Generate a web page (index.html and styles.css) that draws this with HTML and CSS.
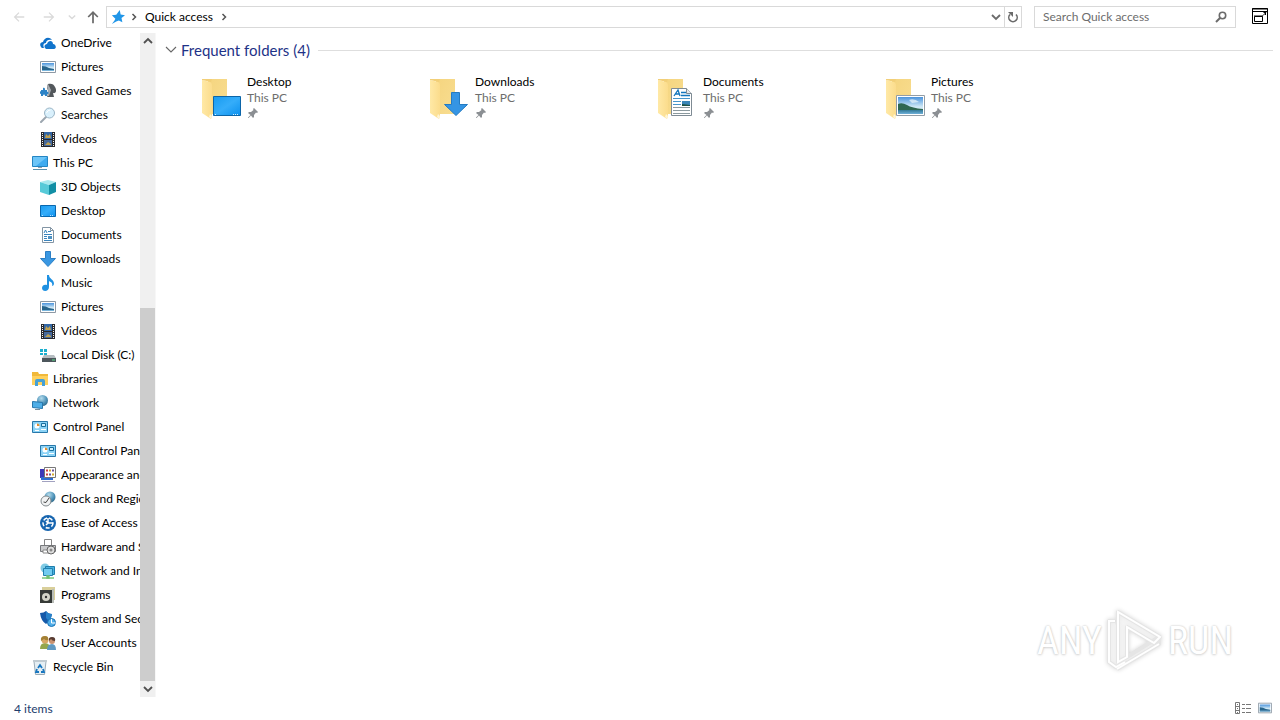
FILE: index.html
```html
<!DOCTYPE html>
<html lang="en">
<head>
<meta charset="utf-8">
<title>Quick access</title>
<link rel="stylesheet" href="styles.css">
</head>
<body>
<svg class="sprite" aria-hidden="true">
  <defs>
    <linearGradient id="g-blue" x1="0" y1="0" x2="1" y2="1"><stop offset="0" stop-color="#189bf0"/><stop offset=".5" stop-color="#35adfa"/><stop offset="1" stop-color="#0b90ee"/></linearGradient>
    <linearGradient id="g-folder" x1="0" y1="0" x2="1" y2="1"><stop offset="0" stop-color="#f5d57f"/><stop offset="1" stop-color="#f8dd91"/></linearGradient>
    <linearGradient id="g-flap" x1="0" y1="0" x2="1" y2="0"><stop offset="0" stop-color="#ffe9a6"/><stop offset="1" stop-color="#fbdc8c"/></linearGradient>
    <linearGradient id="g-sky" x1="0" y1="0" x2="0" y2="1"><stop offset="0" stop-color="#4a93dc"/><stop offset=".55" stop-color="#cbe6f5"/><stop offset="1" stop-color="#eef7fa"/></linearGradient>
    <linearGradient id="g-sea" x1="0" y1="0" x2="0" y2="1"><stop offset="0" stop-color="#236b86"/><stop offset="1" stop-color="#6fb0d8"/></linearGradient>
    <radialGradient id="g-globe" cx=".4" cy=".3" r=".8"><stop offset="0" stop-color="#b5dcec"/><stop offset=".6" stop-color="#4c91b8"/><stop offset="1" stop-color="#28617f"/></radialGradient>
  </defs>
  <symbol id="i-onedrive" viewBox="0 0 16 16"><path d="M1 12C-1 9 1 7 3 7 4 3 9 1 12 5 8 4 6 6 6 8 3 8 3 11 4 13H3C2 13 1 12.500 1 12Z" fill="#0f70c8"/><path d="M6 14C3 12 5 9 7 9 8 5 13 5 13 9 16 9 17 14 14 14Z" fill="#1174cc"/></symbol>
  <symbol id="i-pictures" viewBox="0 0 16 16"><path d="M.5 2.500h15v11H.5z" fill="#fff" stroke="#8d99a5"/><path d="M2 4h12v8H2z" fill="url(#g-sky)"/><path d="M2 7q4 0 7 2l5 1v2H2z" fill="#28658c"/><path d="M2 11h12v1H2z" fill="#78b4da"/></symbol>
  <symbol id="i-games" viewBox="0 0 16 16"><path d="M8 1c3-1 6 0 7 3 2 3 1 7-2 6l1 4H7l2-4-2-5z" fill="#53585c"/><path d="M8 1l3 6-2 6H7l1-5-1-5z" fill="#a6abb0"/><path d="M3 5c2-1 2 1 2 2h2v2c2-1 2 3 0 2v2H5c0-2-2-2-2 0H1v-2c-2 0-1-3 0-3V7h2z" fill="#2c83c7"/></symbol>
  <symbol id="i-search" viewBox="0 0 16 16"><path d="M6 10l-5 5" stroke="#9ca6af" stroke-width="2" stroke-linecap="round"/><circle cx="9.500" cy="6" r="5" fill="#d9f0fc" stroke="#9bb5c6"/><path d="M6.500 6q1-3 4-3" fill="none" stroke="#fff"/></symbol>
  <symbol id="i-videos" viewBox="0 0 16 16"><path d="M1 1h14v15H1z" fill="#28292c"/><path d="M4 1h8v7H4z" fill="#3266a5"/><path d="M4 9h8v6H4z" fill="#45699b"/><path d="M6 3l2 2 2-2 1 4H5zM5 14l3-3 3 2v1z" fill="#c0a150"/><path d="M2.500 2v13M13.500 2v13" stroke="#f5f5f5" stroke-dasharray="1 1"/></symbol>
  <symbol id="i-pc" viewBox="0 0 16 16"><path d="M.5 1.500h15v10H.5z" fill="#3fabf0" stroke="#2585c2"/><path d="M1 2h14L4 11H1z" fill="#6cc5f8"/><path d="M6 12h4v1H6z" fill="#92a0aa"/><path d="M1 14.500h14" stroke="#5990ae"/></symbol>
  <symbol id="i-3d" viewBox="0 0 16 16"><path d="M0 3l8-2 8 2-7 3z" fill="#a8e9ee"/><path d="M0 3l9 3v10l-9-3z" fill="#57cad8"/><path d="M9 6l7-3v10l-7 3z" fill="#128fa5"/></symbol>
  <symbol id="i-desktop" viewBox="0 0 16 16"><path d="M.5 2.500h15v11H.5z" fill="url(#g-blue)" stroke="#0967ae"/><path d="M2 12.500h2M10 12.500h4" stroke="#b4dfff" stroke-dasharray="1 1"/></symbol>
  <symbol id="i-document" viewBox="0 0 16 16"><path d="M2.500.5h8l3 3v12h-11z" fill="#fff" stroke="#8395a4"/><path d="M10.500.5v3h3" fill="none" stroke="#8395a4"/><path d="M4 6l1.500-3L7 6M8 4.500h3M4 7.500h8M4 9.500h3M4 11.500h3M4 13.500h8" fill="none" stroke="#3a84bd"/><path d="M8 9h4v3H8z" fill="#4e91c2"/></symbol>
  <symbol id="i-down" viewBox="0 0 16 16"><path d="M5.500.5h5v7h5L8 15.500.5 7.500h5z" fill="#3997e2" stroke="#2b7fc5"/></symbol>
  <symbol id="i-music" viewBox="0 0 16 16"><path d="M7 0h2c0 4 5 4 5 9-.3 1-1 2-2 2 1-3-1-4-3-5v6c0 5-7 5-7 1 0-3 3-4 5-3z" fill="#1f91e2"/></symbol>
  <symbol id="i-disk" viewBox="0 0 16 16"><path d="M0 2h3v3H0zM4 2h3v3H4zM0 6h3v2H0zM4 6h3v2H4z" fill="#1bafcf"/><path d="M4 8h10l2 3H2z" fill="#b6bdc1"/><path d="M2 11h14v4H2z" fill="#4d565c"/><path d="M12 13h3" stroke="#58dd88"/></symbol>
  <symbol id="i-libraries" viewBox="0 0 16 16"><path d="M0 1h6l1 2h9v11H0z" fill="#f1b93a"/><path d="M0 5h16v9H0z" fill="#ffd15d"/><path d="M3 15v-5q0-2 2-2h6q2 0 2 2v5h-3v-4H6v4z" fill="#46a0d5"/></symbol>
  <symbol id="i-network" viewBox="0 0 16 16"><circle cx="10.500" cy="5.500" r="5.500" fill="url(#g-globe)"/><path d="M.5 6.500l10 1v6l-10-1z" fill="#4eaee7" stroke="#2877ac"/><path d="M3 14.500h5" stroke="#78909f"/></symbol>
  <symbol id="i-control" viewBox="0 0 16 16"><path d="M.5 2.500h15v11H.5z" fill="#8bd3f6" stroke="#2878aa"/><circle cx="5" cy="7" r="2.500" fill="#fff"/><path d="M5 7V4.500A2.500 2.500 0 0 1 7.500 7z" fill="#e08c2d"/><path d="M3 11.500h4M9 10.500h5" stroke="#fff"/><path d="M9.500 4.500h4v3h-4z" fill="#cdefff" stroke="#176d9d"/></symbol>
  <symbol id="i-appearance" viewBox="0 0 16 16"><path d="M0 2h8v9H0z" fill="#3c38b8"/><path d="M1 10h12v3H1z" fill="#2e6ed0"/><path d="M4.500.5h11v10h-11z" fill="#fff" stroke="#777"/><path d="M6 3.500h2M6 7.500h2" stroke="#cf403e" stroke-width="2"/><path d="M9 3.500h2M12 7.500h2" stroke="#d3a92c" stroke-width="2"/><path d="M12 3.500h2M9 7.500h2" stroke="#6a5299" stroke-width="2"/><path d="M2 14.500h13" stroke="#a2a2c0"/></symbol>
  <symbol id="i-clock" viewBox="0 0 16 16"><circle cx="10" cy="6" r="5.500" fill="url(#g-globe)"/><circle cx="6" cy="10" r="5" fill="#f0f2f3" stroke="#81898d"/><path d="M3.500 11l2.500.5L9 7" fill="none" stroke="#444"/></symbol>
  <symbol id="i-ease" viewBox="0 0 16 16"><circle cx="8" cy="8" r="8" fill="#1765af"/><circle cx="8" cy="8" r="5" fill="none" stroke="#fff" stroke-width="1.500" stroke-dasharray="4 2"/><path d="M8 3v5h5M6 6l2 2-2 2" fill="none" stroke="#fff" stroke-width="1.500"/></symbol>
  <symbol id="i-hardware" viewBox="0 0 16 16"><path d="M4.500.5h7v6h-7z" fill="#fff" stroke="#858585"/><path d="M.5 6.500h15v6H.5z" fill="#c9cacc" stroke="#77797c"/><path d="M3 11h6v3H3z" fill="#fff" stroke="#888"/><circle cx="11" cy="11" r="4" fill="#ddd" stroke="#666"/><circle cx="11" cy="11" r="1.500" fill="#888"/></symbol>
  <symbol id="i-internet" viewBox="0 0 16 16"><circle cx="5" cy="5" r="4.500" fill="#81cbe4"/><path d="M5.500 3.500h9v8h-9z" fill="#48b1e1" stroke="#207eac"/><path d="M3.500 5.500h9v7h-9z" fill="#71cbf0" stroke="#2382b0"/><path d="M2 15h12M7 13h2v3H7z" stroke="#7bc97c" stroke-width="1.500"/></symbol>
  <symbol id="i-programs" viewBox="0 0 16 16"><path d="M2 0h13v13H2z" fill="#d9cf9a"/><path d="M0 3h12v13H0z" fill="#363a37"/><path d="M12 2h2v14h-2z" fill="#b9bdb8"/><circle cx="6" cy="10" r="4" fill="#d3d4c8"/><circle cx="6" cy="10" r="1.200" fill="#333"/></symbol>
  <symbol id="i-system" viewBox="0 0 16 16"><path d="M0 2q4 0 6-2 2 3 6 3-1 7-6 10-5-3-6-11z" fill="#1559a9"/><path d="M6 0q2 3 6 3-.5 4-3 7L6 7z" fill="#2781ca"/><circle cx="11.500" cy="11.500" r="4" fill="#51aee9" stroke="#1671b3"/><path d="M11.500 8v4h4" stroke="#fff" fill="none"/></symbol>
  <symbol id="i-users" viewBox="0 0 16 16"><path d="M0 14q0-6 5-6t5 6z" fill="#94a64d"/><circle cx="5" cy="5" r="3.500" fill="#d9a866"/><path d="M1 6q-1-5 4-5 4 0 3 4-2 1-4-1z" fill="#a48135"/><path d="M7 15q0-6 5-6 4 0 4 6z" fill="#6099c2"/><circle cx="12" cy="6" r="3" fill="#c99270"/><path d="M9 6q-1-4 3-4t3 4q-3 0-4-2z" fill="#583c32"/></symbol>
  <symbol id="i-recycle" viewBox="0 0 16 16"><path d="M2 2.500h12l-1.500 13h-9z" fill="#e5eef3" stroke="#9aabb6"/><path d="M1 2h14" stroke="#c1cbd1" stroke-width="2"/><path d="M6 9l2-3 2 3M5 10l-1 3h3M11 10l1 3H9" fill="none" stroke="#1977c0" stroke-width="1.800"/></symbol>
  <symbol id="i-star" viewBox="0 0 16 16"><path d="M10 0l1 5 5 1-4 3 1 5-4-2-3 1-5 3 3-4 1-2-4-4 5-.5z" fill="#2196e8"/></symbol>
  <symbol id="i-left" viewBox="0 0 16 16"><path d="M14 8H3M8 3L3 8l5 5" fill="none" stroke="currentColor" stroke-width="1.500"/></symbol>
  <symbol id="i-right" viewBox="0 0 16 16"><path d="M2 8h11M8 3l5 5-5 5" fill="none" stroke="currentColor" stroke-width="1.500"/></symbol>
  <symbol id="i-up" viewBox="0 0 16 16"><path d="M8 15V2M2.500 8L8 2.500 13.500 8" fill="none" stroke="currentColor" stroke-width="2"/></symbol>
  <symbol id="i-chev-r" viewBox="0 0 8 8"><path d="M2.500 1l3 3-3 3" fill="none" stroke="currentColor" stroke-width="1.500"/></symbol>
  <symbol id="i-chev-d" viewBox="0 0 10 10"><path d="M1 3l4 4 4-4" fill="none" stroke="currentColor" stroke-width="1.800"/></symbol>
  <symbol id="i-chev-thin" viewBox="0 0 12 12"><path d="M1 3l5 5 5-5" fill="none" stroke="currentColor" stroke-width="1.100"/></symbol>
  <symbol id="i-chev-u" viewBox="0 0 10 10"><path d="M1 7l4-4 4 4" fill="none" stroke="currentColor" stroke-width="1.800"/></symbol>
  <symbol id="i-refresh" viewBox="0 0 12 12"><path d="M9 3.500A4.200 4.200 0 1 1 3 3.500" fill="none" stroke="currentColor" stroke-width="1.600"/><path d="M1 1h5v5z" fill="currentColor"/></symbol>
  <symbol id="i-find" viewBox="0 0 12 12"><circle cx="7.500" cy="4.500" r="3.200" fill="none" stroke="currentColor" stroke-width="1.600"/><path d="M5 7l-4 4" stroke="currentColor" stroke-width="2"/></symbol>
  <symbol id="i-window" viewBox="0 0 16 16"><path d="M.5.5h15v15H.5zM1 3.500h14M2.500 8.500h8v5h-8zM11 7.500l3-3M11.500 4.500H14M13.500 4v3" fill="none" stroke="#000"/><path d="M2 8h9M0 1h16" stroke="#000" stroke-width="1"/></symbol>
  <symbol id="i-pin" viewBox="0 0 12 12"><path d="M7 1l4 4-1 1-1-.5L7 8v2L6 11 4 8.500 1.500 11H1v-.5L3.500 8 1 6l1-1h2l2.500-2L6 2z" fill="#8b8f93"/></symbol>
  <symbol id="i-folder" viewBox="0 0 40 42"><path d="M6 1h19v35H6z" fill="url(#g-folder)"/><path d="M0 2l8 2q2 1 2 3v31l-1 3-9-6z" fill="url(#g-flap)"/><path d="M0 2V1h10l-1 3z" fill="#f2cf78"/><path d="M8 36l2 2-1 3-2-2z" fill="#fff5d5"/></symbol>
  <symbol id="i-details" viewBox="0 0 16 12"><path d="M.5.5h4v11h-4zM0 4.500h5M0 8.500h5M7 2.500h3M11 2.500h5M7 6.500h3M11 6.500h5M7 10.500h3M11 10.500h5M2 2.500h1M2 6.500h1M2 10.500h1" fill="none" stroke="#777"/></symbol>
</svg>

<div class="explorer">
  <header class="toolbar">
    <nav class="history" aria-label="History">
      <button class="tool dim" aria-label="Back"><svg class="icon14"><use href="#i-left"/></svg></button>
      <button class="tool dim" aria-label="Forward"><svg class="icon14"><use href="#i-right"/></svg></button>
      <button class="tool dim recent" aria-label="Recent locations"><svg class="icon8"><use href="#i-chev-d"/></svg></button>
      <button class="tool" aria-label="Up"><svg class="icon14"><use href="#i-up"/></svg></button>
    </nav>
    <div class="address">
      <svg class="icon14"><use href="#i-star"/></svg>
      <svg class="icon8 crumb-arrow"><use href="#i-chev-r"/></svg>
      <a class="crumb" href="#">Quick access</a>
      <svg class="icon8 crumb-arrow"><use href="#i-chev-r"/></svg>
      <button class="tool address-drop" aria-label="Previous locations"><svg class="icon10"><use href="#i-chev-d"/></svg></button>
      <button class="tool refresh" aria-label="Refresh"><svg class="icon12"><use href="#i-refresh"/></svg></button>
    </div>
    <div class="search">
      <input type="text" aria-label="Search Quick access" placeholder="Search Quick access">
      <button class="tool" aria-label="Search"><svg class="icon12"><use href="#i-find"/></svg></button>
    </div>
    <button class="tool expand" aria-label="Open window"><svg class="icon16"><use href="#i-window"/></svg></button>
  </header>

  <div class="body">
    <nav class="tree" aria-label="Folders">
      <a class="child" href="#"><svg class="icon16"><use href="#i-onedrive"/></svg>OneDrive</a>
      <a class="child" href="#"><svg class="icon16"><use href="#i-pictures"/></svg>Pictures</a>
      <a class="child" href="#"><svg class="icon16"><use href="#i-games"/></svg>Saved Games</a>
      <a class="child" href="#"><svg class="icon16"><use href="#i-search"/></svg>Searches</a>
      <a class="child" href="#"><svg class="icon16"><use href="#i-videos"/></svg>Videos</a>
      <a href="#"><svg class="icon16"><use href="#i-pc"/></svg>This PC</a>
      <a class="child" href="#"><svg class="icon16"><use href="#i-3d"/></svg>3D Objects</a>
      <a class="child" href="#"><svg class="icon16"><use href="#i-desktop"/></svg>Desktop</a>
      <a class="child" href="#"><svg class="icon16"><use href="#i-document"/></svg>Documents</a>
      <a class="child" href="#"><svg class="icon16"><use href="#i-down"/></svg>Downloads</a>
      <a class="child" href="#"><svg class="icon16"><use href="#i-music"/></svg>Music</a>
      <a class="child" href="#"><svg class="icon16"><use href="#i-pictures"/></svg>Pictures</a>
      <a class="child" href="#"><svg class="icon16"><use href="#i-videos"/></svg>Videos</a>
      <a class="child" href="#"><svg class="icon16"><use href="#i-disk"/></svg>Local Disk (C:)</a>
      <a href="#"><svg class="icon16"><use href="#i-libraries"/></svg>Libraries</a>
      <a href="#"><svg class="icon16"><use href="#i-network"/></svg>Network</a>
      <a href="#"><svg class="icon16"><use href="#i-control"/></svg>Control Panel</a>
      <a class="child" href="#"><svg class="icon16"><use href="#i-control"/></svg>All Control Panel Items</a>
      <a class="child" href="#"><svg class="icon16"><use href="#i-appearance"/></svg>Appearance and Personalization</a>
      <a class="child" href="#"><svg class="icon16"><use href="#i-clock"/></svg>Clock and Region</a>
      <a class="child" href="#"><svg class="icon16"><use href="#i-ease"/></svg>Ease of Access</a>
      <a class="child" href="#"><svg class="icon16"><use href="#i-hardware"/></svg>Hardware and Sound</a>
      <a class="child" href="#"><svg class="icon16"><use href="#i-internet"/></svg>Network and Internet</a>
      <a class="child" href="#"><svg class="icon16"><use href="#i-programs"/></svg>Programs</a>
      <a class="child" href="#"><svg class="icon16"><use href="#i-system"/></svg>System and Security</a>
      <a class="child" href="#"><svg class="icon16"><use href="#i-users"/></svg>User Accounts</a>
      <a href="#"><svg class="icon16"><use href="#i-recycle"/></svg>Recycle Bin</a>
    </nav>
    <div class="scrollbar">
      <button class="tool" aria-label="Scroll up"><svg class="icon10"><use href="#i-chev-u"/></svg></button>
      <div class="track"><div class="thumb"></div></div>
      <button class="tool" aria-label="Scroll down"><svg class="icon10"><use href="#i-chev-d"/></svg></button>
    </div>

    <main class="content">
      <h1 class="group"><svg class="icon12"><use href="#i-chev-thin"/></svg>Frequent folders (4)</h1>
      <div class="tiles">
        <a class="tile" href="#">
          <span class="folder"><svg class="folder-base"><use href="#i-folder"/></svg>
            <svg class="overlay" viewBox="0 0 28 28"><path d="M.5 6.500h27v19H.5z" fill="url(#g-blue)" stroke="#0c65a8"/><path d="M2 24.500h2M20 24.500h6" stroke="#d6efff" stroke-dasharray="1 1"/></svg></span>
          <span class="label"><span class="name">Desktop</span><span>This PC</span><svg class="icon12"><use href="#i-pin"/></svg></span>
        </a>
        <a class="tile" href="#">
          <span class="folder"><svg class="folder-base"><use href="#i-folder"/></svg>
            <svg class="overlay" viewBox="0 0 28 28"><path d="M10.500 2.500h8v12h8L15 25.500 3.500 14.500h7z" fill="#3595e4" stroke="#247bc2"/></svg></span>
          <span class="label"><span class="name">Downloads</span><span>This PC</span><svg class="icon12"><use href="#i-pin"/></svg></span>
        </a>
        <a class="tile" href="#">
          <span class="folder"><svg class="folder-base"><use href="#i-folder"/></svg>
            <svg class="overlay" viewBox="0 0 28 28"><path d="M2.500-1.500h15l5 5v22h-20z" fill="#fff" stroke="#7f8b94"/><path d="M17.500-1.500v5h5" fill="#e5e9ec" stroke="#7f8b94"/><path d="M4 8.500h17M4 11.500h8M4 14.500h8" stroke="#4796cb"/><path d="M4 17.500h17M4 20.500h17M4 23.500h17" stroke="#8b999e"/><path d="M5 6l4-6 2 6M6 4h4M12 2.500h5M12 5.500h9" fill="none" stroke="#1376bd" stroke-width="1.300"/><path d="M13 11h8v5h-8z" fill="#3985b7"/><path d="M13 14l8 1v1h-8z" fill="#1d5144"/></svg></span>
          <span class="label"><span class="name">Documents</span><span>This PC</span><svg class="icon12"><use href="#i-pin"/></svg></span>
        </a>
        <a class="tile" href="#">
          <span class="folder"><svg class="folder-base"><use href="#i-folder"/></svg>
            <svg class="overlay" viewBox="0 0 28 28"><path d="M-.5 5.500h28v20h-28z" fill="#fff" stroke="#929da6"/><path d="M1 7h25v17H1z" fill="url(#g-sky)"/><path d="M1 19h25v5H1z" fill="url(#g-sea)"/><path d="M1 14q4-2 9 1t16 4v1H1z" fill="#2f6751"/><path d="M12 10q5-2 10 2l-7 1z" fill="#eff8fc" opacity=".7"/></svg></span>
          <span class="label"><span class="name">Pictures</span><span>This PC</span><svg class="icon12"><use href="#i-pin"/></svg></span>
        </a>
      </div>
      <div class="watermark">
        <span>ANY</span>
        <svg viewBox="0 0 58 64"><path d="M9 12H3v41l7 5 9-5M12 3v50l9-5V18l27 16 6-6zM11 60l42-25v-7L21 48" fill="#fff" fill-opacity=".5" stroke="#e5e5e5" stroke-width="4" stroke-linejoin="round"/><path d="M9 12H3v41l7 5 9-5M12 3v50l9-5V18l27 16 6-6zM11 60l42-25" fill="none" stroke="#fff" stroke-width="2"/></svg>
        <span>RUN</span>
      </div>
    </main>
  </div>

  <footer class="status">
    <span>4 items</span>
    <div class="views">
      <button class="tool" aria-label="Details view"><svg class="details-icon"><use href="#i-details"/></svg></button>
      <button class="tool" aria-label="Large icons view"><svg class="icon14"><use href="#i-pictures"/></svg></button>
    </div>
  </footer>
</div>
</body>
</html>
```
FILE: styles.css
```css
* { box-sizing: border-box; }
body {
  margin: 0;
  background: #fff;
  color: #000;
  font: 12px/16px Lato, "Open Sans", "Noto Sans", sans-serif;
}
a { color: inherit; text-decoration: none; }
svg { display: block; flex: none; }
.sprite { position: absolute; width: 0; height: 0; }
.icon8 { width: 8px; height: 8px; }
.icon10 { width: 10px; height: 10px; }
.icon12 { width: 12px; height: 12px; }
.icon14 { width: 14px; height: 14px; }
.icon16 { width: 16px; height: 16px; }

.explorer { display: flex; flex-direction: column; height: 100vh; overflow: hidden; }
.tool {
  display: flex;
  align-items: center;
  justify-content: center;
  padding: 0;
  border: 0;
  background: none;
  color: #6b6b6b;
}
.dim { color: #dadada; }

.toolbar { display: flex; align-items: center; flex: none; height: 33px; padding: 0 12px; }
.history { display: flex; align-items: center; gap: 16px; width: 94px; }
.history .recent { width: 8px; margin: 0 -6px 0 -4px; }
.address {
  display: flex;
  align-items: center;
  flex: 1;
  height: 22px;
  padding-left: 4px;
  border: 1px solid #d9d9d9;
}
.crumb-arrow { margin: 0 5px; color: #555; }
.crumb { padding: 0 2px; }
.address-drop { width: 16px; margin-left: auto; }
.refresh { align-self: stretch; width: 17px; border-left: 1px solid #d9d9d9; }
.search {
  display: flex;
  align-items: center;
  width: 202px;
  height: 22px;
  margin: 0 16px 0 12px;
  padding: 0 8px;
  border: 1px solid #d9d9d9;
}
.search input {
  flex: 1;
  min-width: 0;
  padding: 0;
  border: 0;
  outline: 0;
  background: none;
  font: inherit;
}
.search input::placeholder { color: #6d6d6d; opacity: 1; }
.expand { padding-bottom: 2px; }

.body { display: flex; flex: 1; min-height: 0; }
.tree { width: 140px; overflow: hidden; margin-top: -2px; }
.tree a {
  display: flex;
  align-items: center;
  gap: 5px;
  height: 24px;
  padding-left: 32px;
  white-space: nowrap;
}
.tree .child { padding-left: 40px; }
.scrollbar { display: flex; flex-direction: column; width: 16px; background: #f0f0f0; border-right: 1px solid #f7f7f7; }
.scrollbar .tool { height: 16px; color: #505050; }
.track { display: flex; flex: 1; align-items: flex-end; }
.thumb { width: 100%; height: 59%; background: #cdcdcd; }

.content { display: flex; flex-direction: column; flex: 1; min-width: 0; padding: 7px 7px 24px 9px; }
.group {
  display: flex;
  align-items: center;
  gap: 4px;
  margin: 0;
  color: #1e3287;
  font-size: 15px;
  font-weight: 400;
  line-height: 20px;
}
.group svg { color: #666; }
.group::after { content: ""; flex: 1; height: 1px; margin-left: 4px; background: #dedede; }
.tiles { display: grid; grid-template-columns: repeat(auto-fill, 228px); padding: 14px 0 0 37px; }
.tile { display: flex; gap: 5px; }
.folder { position: relative; width: 40px; height: 46px; padding-top: 4px; }
.folder-base { width: 40px; height: 42px; }
.overlay { position: absolute; right: 1px; bottom: 2px; width: 28px; height: 28px; overflow: visible; }
.label { display: flex; flex-direction: column; color: #6d6d6d; }
.label .name { color: #000; }
.label svg { margin-top: 1px; }

.watermark {
  display: flex;
  align-items: center;
  align-self: flex-end;
  gap: 4px;
  margin: auto 40px 0 0;
  color: #fff;
  font: 38px/64px "Liberation Sans Narrow", "Roboto Condensed", "Liberation Sans", sans-serif;
  text-shadow: 0 0 2px #bdbdbd, 0 1px 3px #dedede;
}
.watermark svg { width: 58px; height: 64px; filter: drop-shadow(0 0 2px #d5d5d5); }

.status { display: flex; align-items: center; justify-content: space-between; flex: none; height: 23px; padding: 0 8px 0 14px; color: #1d3d6d; }
.views { display: flex; align-items: center; gap: 7px; padding-bottom: 2px; }
.details-icon { width: 16px; height: 12px; }
```
